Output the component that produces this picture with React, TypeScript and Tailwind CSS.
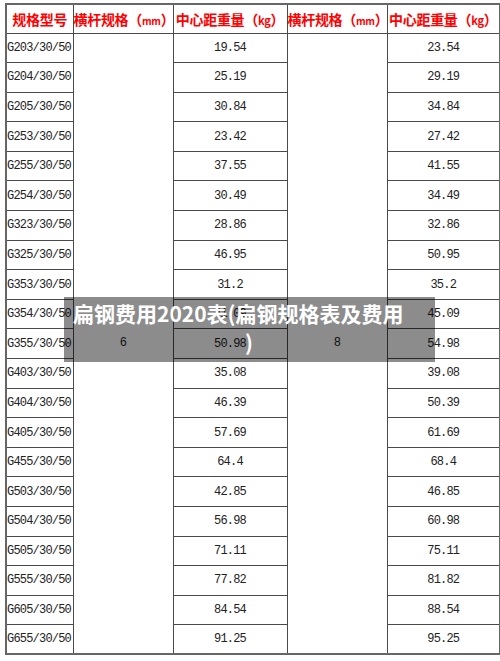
import React from "react"

const rows: [string, string, string][] = [
  ["G203/30/50", "19.54", "23.54"],
  ["G204/30/50", "25.19", "29.19"],
  ["G205/30/50", "30.84", "34.84"],
  ["G253/30/50", "23.42", "27.42"],
  ["G255/30/50", "37.55", "41.55"],
  ["G254/30/50", "30.49", "34.49"],
  ["G323/30/50", "28.86", "32.86"],
  ["G325/30/50", "46.95", "50.95"],
  ["G353/30/50", "31.2", "35.2"],
  ["G354/30/50", "41.09", "45.09"],
  ["G355/30/50", "50.98", "54.98"],
  ["G403/30/50", "35.08", "39.08"],
  ["G404/30/50", "46.39", "50.39"],
  ["G405/30/50", "57.69", "61.69"],
  ["G455/30/50", "64.4", "68.4"],
  ["G503/30/50", "42.85", "46.85"],
  ["G504/30/50", "56.98", "60.98"],
  ["G505/30/50", "71.11", "75.11"],
  ["G555/30/50", "77.82", "81.82"],
  ["G605/30/50", "84.54", "88.54"],
  ["G655/30/50", "91.25", "95.25"],
]

const cjk = { fontFamily: '"Noto Sans CJK SC", sans-serif' }
const mono = { fontFamily: '"Liberation Mono", monospace' }

function HeadCell(props: { children: React.ReactNode }) {
  return (
    <th
      className="whitespace-nowrap border border-[#4a4a4a] p-0 text-center align-middle text-[14px] font-bold leading-none tracking-[-0.3px] text-[#f00]"
      style={cjk}
    >
      {props.children}
    </th>
  )
}

export default function App() {
  return (
    <div className="relative h-[661px] w-[500px] overflow-hidden bg-white">
      <table className="ml-[5px] mt-[3px] w-[494px] table-fixed border-collapse border-2 border-[#666]">
        <colgroup>
          <col className="w-[67px]" />
          <col className="w-[100px]" />
          <col className="w-[114px]" />
          <col className="w-[100px]" />
          <col className="w-[113px]" />
        </colgroup>
        <thead>
          <tr className="h-[29px]">
            <HeadCell>规格型号</HeadCell>
            <HeadCell>
              横杆规格（<span className="text-[10px]">mm</span>）
            </HeadCell>
            <HeadCell>
              中心距重量（<span className="text-[11px]">kg</span>）
            </HeadCell>
            <HeadCell>
              横杆规格（<span className="text-[10px]">mm</span>）
            </HeadCell>
            <HeadCell>
              中心距重量（<span className="text-[11px]">kg</span>）
            </HeadCell>
          </tr>
        </thead>
        <tbody className="text-[12px] tracking-[-0.8px] text-[#222]" style={mono}>
          {rows.map(([model, a, b], i) => (
            <tr key={model} className="h-[29.6px]">
              <td className="overflow-visible whitespace-nowrap border border-[#4a4a4a] p-0 text-left">{model}</td>
              {i === 0 ? (
                <td rowSpan={rows.length} className="border border-[#4a4a4a] p-0 text-center align-middle">
                  6
                </td>
              ) : null}
              <td className="border border-[#4a4a4a] p-0 text-center">{a}</td>
              {i === 0 ? (
                <td rowSpan={rows.length} className="border border-[#4a4a4a] p-0 text-center align-middle">
                  8
                </td>
              ) : null}
              <td className="border border-[#4a4a4a] p-0 text-center">{b}</td>
            </tr>
          ))}
        </tbody>
      </table>

      <div
        className="absolute left-[64px] top-[297px] flex h-[65px] w-[371px] flex-col bg-black/45 pl-[9px] pt-[2px] text-[21px] font-bold leading-[29px] text-white"
        style={cjk}
      >
        <span className="whitespace-nowrap">扁钢费用2020表(扁钢规格表及费用</span>
        <span className="pl-[172px]">)</span>
      </div>
    </div>
  )
}
